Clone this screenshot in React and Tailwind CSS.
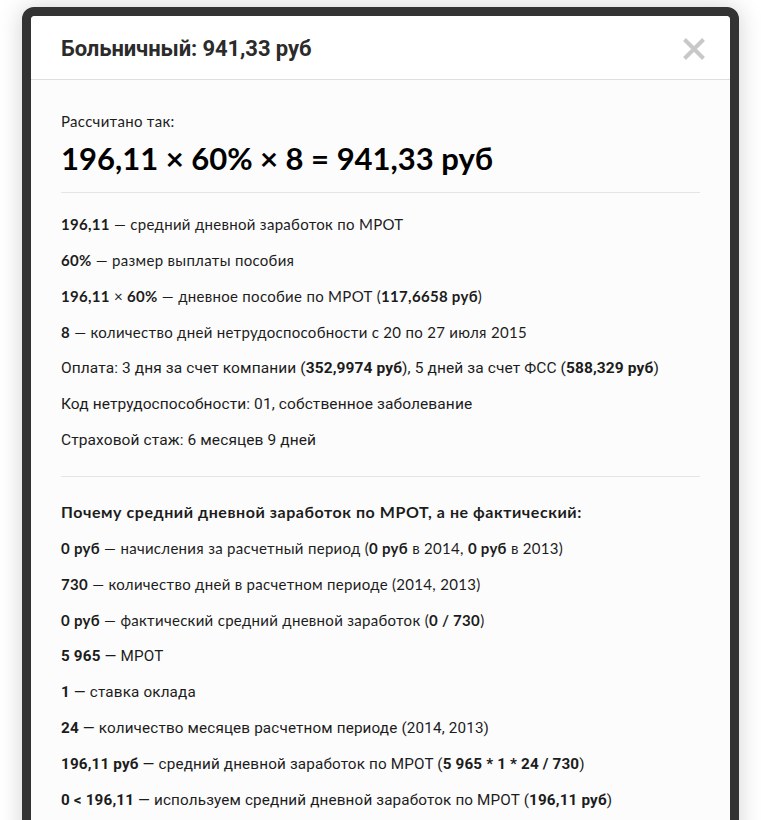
import React from 'react';

const rows1 = [
  [<b key="a">196,11</b>, ' — средний дневной заработок по МРОТ'],
  [<b key="a">60%</b>, ' — размер выплаты пособия'],
  [<b key="a">196,11</b>, ' × ', <b key="b">60%</b>, ' — дневное пособие по МРОТ (', <b key="c">117,6658 руб</b>, ')'],
  [<b key="a">8</b>, ' — количество дней нетрудоспособности с 20 по 27 июля 2015'],
];

const rows2 = [
  ['Оплата: 3 дня за счет компании (', <b key="a">352,9974 руб</b>, '), 5 дней за счет ФСС (', <b key="b">588,329 руб</b>, ')'],
  ['Код нетрудоспособности: 01, собственное заболевание'],
  ['Страховой стаж: 6 месяцев 9 дней'],
];

const rows3 = [
  [<b key="a">0 руб</b>, ' — начисления за расчетный период (', <b key="b">0 руб</b>, ' в 2014, ', <b key="c">0 руб</b>, ' в 2013)'],
  [<b key="a">730</b>, ' — количество дней в расчетном периоде (2014, 2013)'],
  [<b key="a">0 руб</b>, ' — фактический средний дневной заработок (', <b key="b">0 / 730</b>, ')'],
];

const rows4 = [
  [<b key="a">5 965</b>, ' — МРОТ'],
  [<b key="a">1</b>, ' — ставка оклада'],
  [<b key="a">24</b>, ' — количество месяцев расчетном периоде (2014, 2013)'],
  [<b key="a">196,11 руб</b>, ' — средний дневной заработок по МРОТ (', <b key="b">5 965 * 1 * 24 / 730</b>, ')'],
  [<b key="a">0 &lt; 196,11</b>, ' — используем средний дневной заработок по МРОТ (', <b key="b">196,11 руб</b>, ')'],
];

// some lines in the shot are set in a narrower face
const styles = {
  normal: "mb-4 leading-5 text-[15px] tracking-[0.3px]",
  narrow: "mb-4 leading-5 text-[15.5px] font-['Roboto',sans-serif] tracking-[0.1px]",
  narrower: "mb-4 leading-5 text-[15.25px] font-['Roboto',sans-serif] tracking-[0.15px]",
};

function Row({ parts, kind = 'normal' }) {
  return <p className={styles[kind]}>{parts}</p>;
}

export default function App() {
  return (
    <div className="h-[820px] bg-white pl-[22px] pt-[7px] overflow-hidden font-['Lato',sans-serif] text-[#1c1c1c]">
      <div className="w-[717px] rounded-[12px] border-[9px] border-[#333] shadow-[0_0_24px_rgba(0,0,0,0.18)] bg-[#333]">
        <div className="rounded-[4px] bg-[#fcfcfc] overflow-hidden">
          <div className="h-[64px] flex items-center justify-between px-[30px] bg-white border-b border-[#dedede]">
            <h1 className="text-[22px] font-bold text-[#2b2b2b] font-['Roboto',sans-serif] tracking-[-0.1px] pt-[2px]">Больничный: 941,33 руб</h1>
            <svg width="24" height="24" viewBox="0 0 24 24" className="mr-[-6px] mt-[2px]">
              <path d="M2.5 2.5 L21.5 21.5 M21.5 2.5 L2.5 21.5" stroke="#c8c8c8" strokeWidth="4" />
            </svg>
          </div>
          <div className="px-[30px] pt-[31px] pb-10">
            <p className="text-[15px] leading-5 tracking-[0.3px]">Рассчитано так:</p>
            <p className="mt-[7px] text-[31px] leading-10 font-bold text-black">196,11 × 60% × 8 = 941,33 руб</p>
            <hr className="mt-[14px] mb-[21px] border-0 h-px bg-[#e5e5e5]" />
            {rows1.map((r, i) => <Row key={i} parts={r} />)}
            {rows2.map((r, i) => <Row key={i} parts={r} kind="narrow" />)}
            <hr className="mt-[26px] mb-[25px] border-0 h-px bg-[#e5e5e5]" />
            <p className="mb-4 leading-5 text-[16px] font-bold tracking-[0.55px]">Почему средний дневной заработок по МРОТ, а не фактический:</p>
            {rows3.map((r, i) => <Row key={i} parts={r} />)}
            {rows4.map((r, i) => <Row key={i} parts={r} kind="narrower" />)}
          </div>
        </div>
      </div>
    </div>
  );
}
